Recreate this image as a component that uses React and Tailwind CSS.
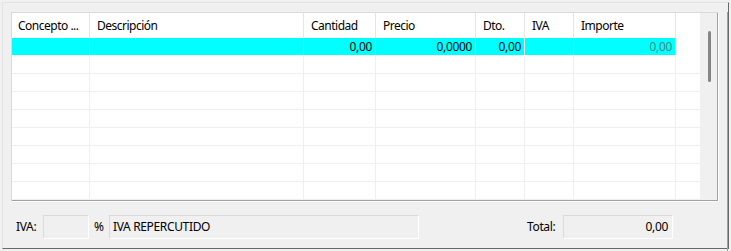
import React from 'react';

const cols = [
  { w: 'w-[78px]', label: 'Concepto ...', pad: 'pl-[6px]' },
  { w: 'w-[214px]', label: 'Descripción', pad: 'pl-[7px]' },
  { w: 'w-[72px]', label: 'Cantidad', value: '0,00', pad: 'pl-[7px]' },
  { w: 'w-[100px]', label: 'Precio', value: '0,0000', pad: 'pl-[7px]' },
  { w: 'w-[49px]', label: 'Dto.', value: '0,00', pad: 'pl-[7px]' },
  { w: 'w-[49px]', label: 'IVA', pad: 'pl-[7px]' },
  { w: 'w-[102px]', label: 'Importe', value: '0,00', muted: true, pad: 'pl-[7px]' },
];

const font = { fontFamily: '"Segoe UI", "Noto Sans", sans-serif' };

function HeaderRow() {
  return (
    <div className="flex h-[25px] bg-white">
      {cols.map((c) => (
        <div key={c.label} className={`${c.w} ${c.pad} shrink-0 border-r border-[#e5e5e5] flex items-center text-black whitespace-nowrap tracking-[-0.5px]`}>
          {c.label}
        </div>
      ))}
      <div className="flex-1" />
    </div>
  );
}

function SelectedRow() {
  return (
    <div className="flex h-[18px] border-b border-white">
      {cols.map((c) => (
        <div key={c.label} className={`${c.w} shrink-0 border-r border-white bg-[#00ffff] pr-[3px] flex items-center justify-end ${c.muted ? 'text-[#4f8484]' : 'text-black'}`}>
          {c.value}
        </div>
      ))}
      <div className="flex-1 bg-white" />
    </div>
  );
}

function EmptyRow() {
  return (
    <div className="flex h-[18px] border-b border-[#efefef] bg-white">
      {cols.map((c) => (
        <div key={c.label} className={`${c.w} shrink-0 border-r border-[#efefef]`} />
      ))}
      <div className="flex-1" />
    </div>
  );
}

function Box({ w, children, right }) {
  return (
    <div className={`${w} h-[24px] shrink-0 border border-t-[#dadada] border-l-[#dadada] border-r-white border-b-white bg-[#f0f0f0] flex items-center ${right ? 'justify-end pr-[4px]' : 'pl-[3px]'}`}>
      {children}
    </div>
  );
}

export default function App() {
  return (
    <div className="w-[731px] h-[251px] bg-[#f0f0f0] p-[2px] text-[12px] leading-none tracking-[-0.35px]" style={font}>
      <div className="w-[727px] h-[247px] border-t border-l border-[#e3e3e3] border-r border-b border-r-[#696969] border-b-[#696969]">
        <div className="h-full border-r border-b border-[#a0a0a0]">
          {/* grid */}
          <div className="ml-[8px] mt-[9px] w-[708px] h-[190px] border-t border-l border-[#dadada] border-r border-b border-r-white border-b-white">
            <div className="h-full flex border-r border-b border-[#a0a0a0]">
              <div className="w-[688px] bg-white overflow-hidden">
                <HeaderRow />
                <SelectedRow />
                {Array.from({ length: 8 }).map((_, i) => (
                  <EmptyRow key={i} />
                ))}
              </div>
              <div className="flex-1 bg-[#f0f0f0] pt-[18px] pl-[8px]">
                <div className="w-[3px] h-[51px] rounded-full bg-[#858585]" />
              </div>
            </div>
          </div>

          {/* footer */}
          <div className="flex items-center mt-[13px] h-[24px] pl-[13px] text-black">
            <span className="w-[27px] shrink-0">IVA:</span>
            <Box w="w-[46px]" />
            <span className="w-[20px] shrink-0 pl-[5px]">%</span>
            <Box w="w-[310px]">IVA REPERCUTIDO</Box>
            <span className="ml-[108px] w-[36px] shrink-0">Total:</span>
            <Box w="w-[110px]" right>0,00</Box>
          </div>
        </div>
      </div>
    </div>
  );
}
